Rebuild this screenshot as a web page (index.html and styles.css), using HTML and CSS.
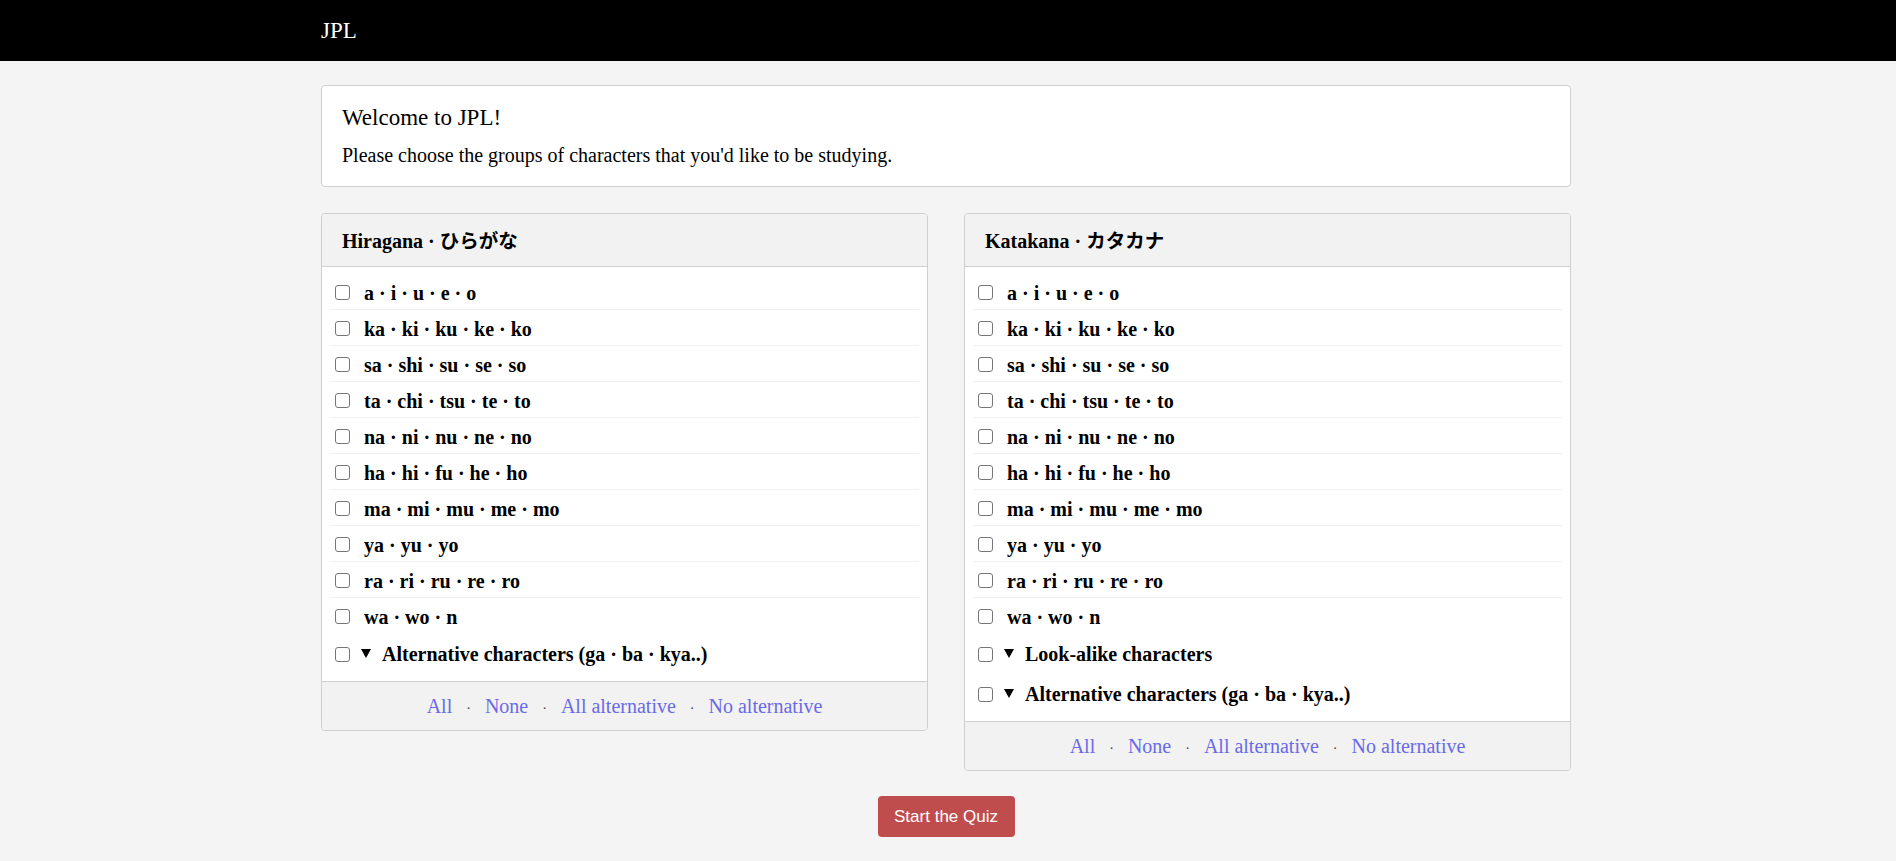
FILE: index.html
```html
<!DOCTYPE html>
<html lang="en">
<head>
<meta charset="utf-8">
<title>JPL</title>
<link rel="stylesheet" href="styles.css">
</head>
<body>
<nav class="navbar">
  <div class="container"><span class="brand">JPL</span></div>
</nav>
<main class="container main">
  <section class="card welcome">
    <h1>Welcome to JPL!</h1>
    <p>Please choose the groups of characters that you'd like to be studying.</p>
  </section>

  <div class="panels">
    <section class="panel">
      <header class="panel-head">Hiragana · <span class="jp">ひらがな</span></header>
      <div class="panel-body">
        <ul class="rows">
          <li><input type="checkbox"><label>a · i · u · e · o</label></li>
          <li><input type="checkbox"><label>ka · ki · ku · ke · ko</label></li>
          <li><input type="checkbox"><label>sa · shi · su · se · so</label></li>
          <li><input type="checkbox"><label>ta · chi · tsu · te · to</label></li>
          <li><input type="checkbox"><label>na · ni · nu · ne · no</label></li>
          <li><input type="checkbox"><label>ha · hi · fu · he · ho</label></li>
          <li><input type="checkbox"><label>ma · mi · mu · me · mo</label></li>
          <li><input type="checkbox"><label>ya · yu · yo</label></li>
          <li><input type="checkbox"><label>ra · ri · ru · re · ro</label></li>
          <li><input type="checkbox"><label>wa · wo · n</label></li>
        </ul>
        <div class="group"><input type="checkbox"><svg class="tri" width="10" height="9" viewBox="0 0 10 9"><polygon points="0,0 10,0 5,9"/></svg><label>Alternative characters (ga · ba · kya..)</label></div>
      </div>
      <footer class="panel-foot"><a href="#">All</a><span class="sep">·</span><a href="#">None</a><span class="sep">·</span><a href="#">All alternative</a><span class="sep">·</span><a href="#">No alternative</a></footer>
    </section>

    <section class="panel">
      <header class="panel-head">Katakana · <span class="jp">カタカナ</span></header>
      <div class="panel-body">
        <ul class="rows">
          <li><input type="checkbox"><label>a · i · u · e · o</label></li>
          <li><input type="checkbox"><label>ka · ki · ku · ke · ko</label></li>
          <li><input type="checkbox"><label>sa · shi · su · se · so</label></li>
          <li><input type="checkbox"><label>ta · chi · tsu · te · to</label></li>
          <li><input type="checkbox"><label>na · ni · nu · ne · no</label></li>
          <li><input type="checkbox"><label>ha · hi · fu · he · ho</label></li>
          <li><input type="checkbox"><label>ma · mi · mu · me · mo</label></li>
          <li><input type="checkbox"><label>ya · yu · yo</label></li>
          <li><input type="checkbox"><label>ra · ri · ru · re · ro</label></li>
          <li><input type="checkbox"><label>wa · wo · n</label></li>
        </ul>
        <div class="group"><input type="checkbox"><svg class="tri" width="10" height="9" viewBox="0 0 10 9"><polygon points="0,0 10,0 5,9"/></svg><label>Look-alike characters</label></div>
        <div class="group"><input type="checkbox"><svg class="tri" width="10" height="9" viewBox="0 0 10 9"><polygon points="0,0 10,0 5,9"/></svg><label>Alternative characters (ga · ba · kya..)</label></div>
      </div>
      <footer class="panel-foot"><a href="#">All</a><span class="sep">·</span><a href="#">None</a><span class="sep">·</span><a href="#">All alternative</a><span class="sep">·</span><a href="#">No alternative</a></footer>
    </section>
  </div>

  <div class="actions"><button class="btn-start" type="button">Start the Quiz</button></div>
</main>
</body>
</html>
```

FILE: styles.css
```css
html, body {
  margin: 0;
  padding: 0;
}
body {
  background: #f4f4f4;
  color: #000;
  font-family: "Liberation Serif", "Noto Sans CJK JP", serif;
}
.container {
  width: 1250px;
  margin: 0 auto;
  padding-right: 4px;
}
.navbar {
  background: #000;
  height: 61px;
}
.brand {
  display: block;
  color: #fff;
  font-size: 23px;
  line-height: 61px;
}
.main {
  padding-top: 24px;
  padding-bottom: 24px;
}
.card {
  background: #fff;
  border: 1px solid #cfcfcf;
  border-radius: 4px;
}
.welcome {
  padding: 19px 20px 19px;
}
.welcome h1 {
  margin: 0 0 12px;
  font-size: 23px;
  line-height: 26px;
  font-weight: normal;
}
.welcome p {
  margin: 0;
  font-size: 20px;
  line-height: 24px;
}
.panels {
  display: grid;
  grid-template-columns: 1fr 1fr;
  column-gap: 36px;
  align-items: start;
  margin-top: 26px;
}
.panel {
  background: #fff;
  border: 1px solid #cfcfcf;
  border-radius: 4px;
  overflow: hidden;
}
.panel-head {
  background: #f2f2f2;
  border-bottom: 1px solid #cfcfcf;
  padding: 0 20px;
  height: 52px;
  line-height: 52px;
  font-size: 20px;
  font-weight: bold;
}
.jp {
  font-family: "Noto Sans CJK JP", sans-serif;
  font-weight: bold;
  font-size: 19.5px;
}
.panel-body {
  padding: 7px 8px 7px;
}
.rows {
  list-style: none;
  margin: 0;
  padding: 0;
}
.rows li {
  display: flex;
  align-items: flex-start;
  height: 35px;
  border-bottom: 1px solid #f0f0f0;
}
.rows li:last-child {
  border-bottom: 0;
  height: 36px;
}
input[type="checkbox"] {
  appearance: none;
  -webkit-appearance: none;
  box-sizing: border-box;
  width: 15px;
  height: 15px;
  margin: 11px 14px 0 5px;
  border: 1px solid #767676;
  border-radius: 3px;
  background: #fff;
  flex: none;
}
.rows label,
.group label {
  font-weight: bold;
  font-size: 20px;
  line-height: 36px;
  padding-top: 1px;
  white-space: nowrap;
}
.group {
  display: flex;
  align-items: flex-start;
  height: 40px;
}
.group input[type="checkbox"] {
  margin-top: 13px;
  margin-right: 11px;
}
.group label {
  padding-top: 2px;
}
.tri {
  flex: none;
  margin-top: 15px;
  margin-right: 11px;
  fill: #000;
}
.panel-foot {
  background: #f2f2f2;
  border-top: 1px solid #cfcfcf;
  text-align: center;
  height: 48px;
  line-height: 48px;
  font-size: 20px;
}
.panel-foot a {
  color: #6a6ae6;
  text-decoration: none;
}
.sep {
  color: #444;
  font-size: 14px;
  margin: 0 14px;
}
.actions {
  display: flex;
  justify-content: center;
  margin-top: 25px;
}
.btn-start {
  font-family: "Liberation Sans", Arial, sans-serif;
  font-size: 17px;
  color: #fff;
  background: #c04d4d;
  border: 0;
  border-radius: 4px;
  width: 137px;
  height: 41px;
  padding: 0;
}
```
